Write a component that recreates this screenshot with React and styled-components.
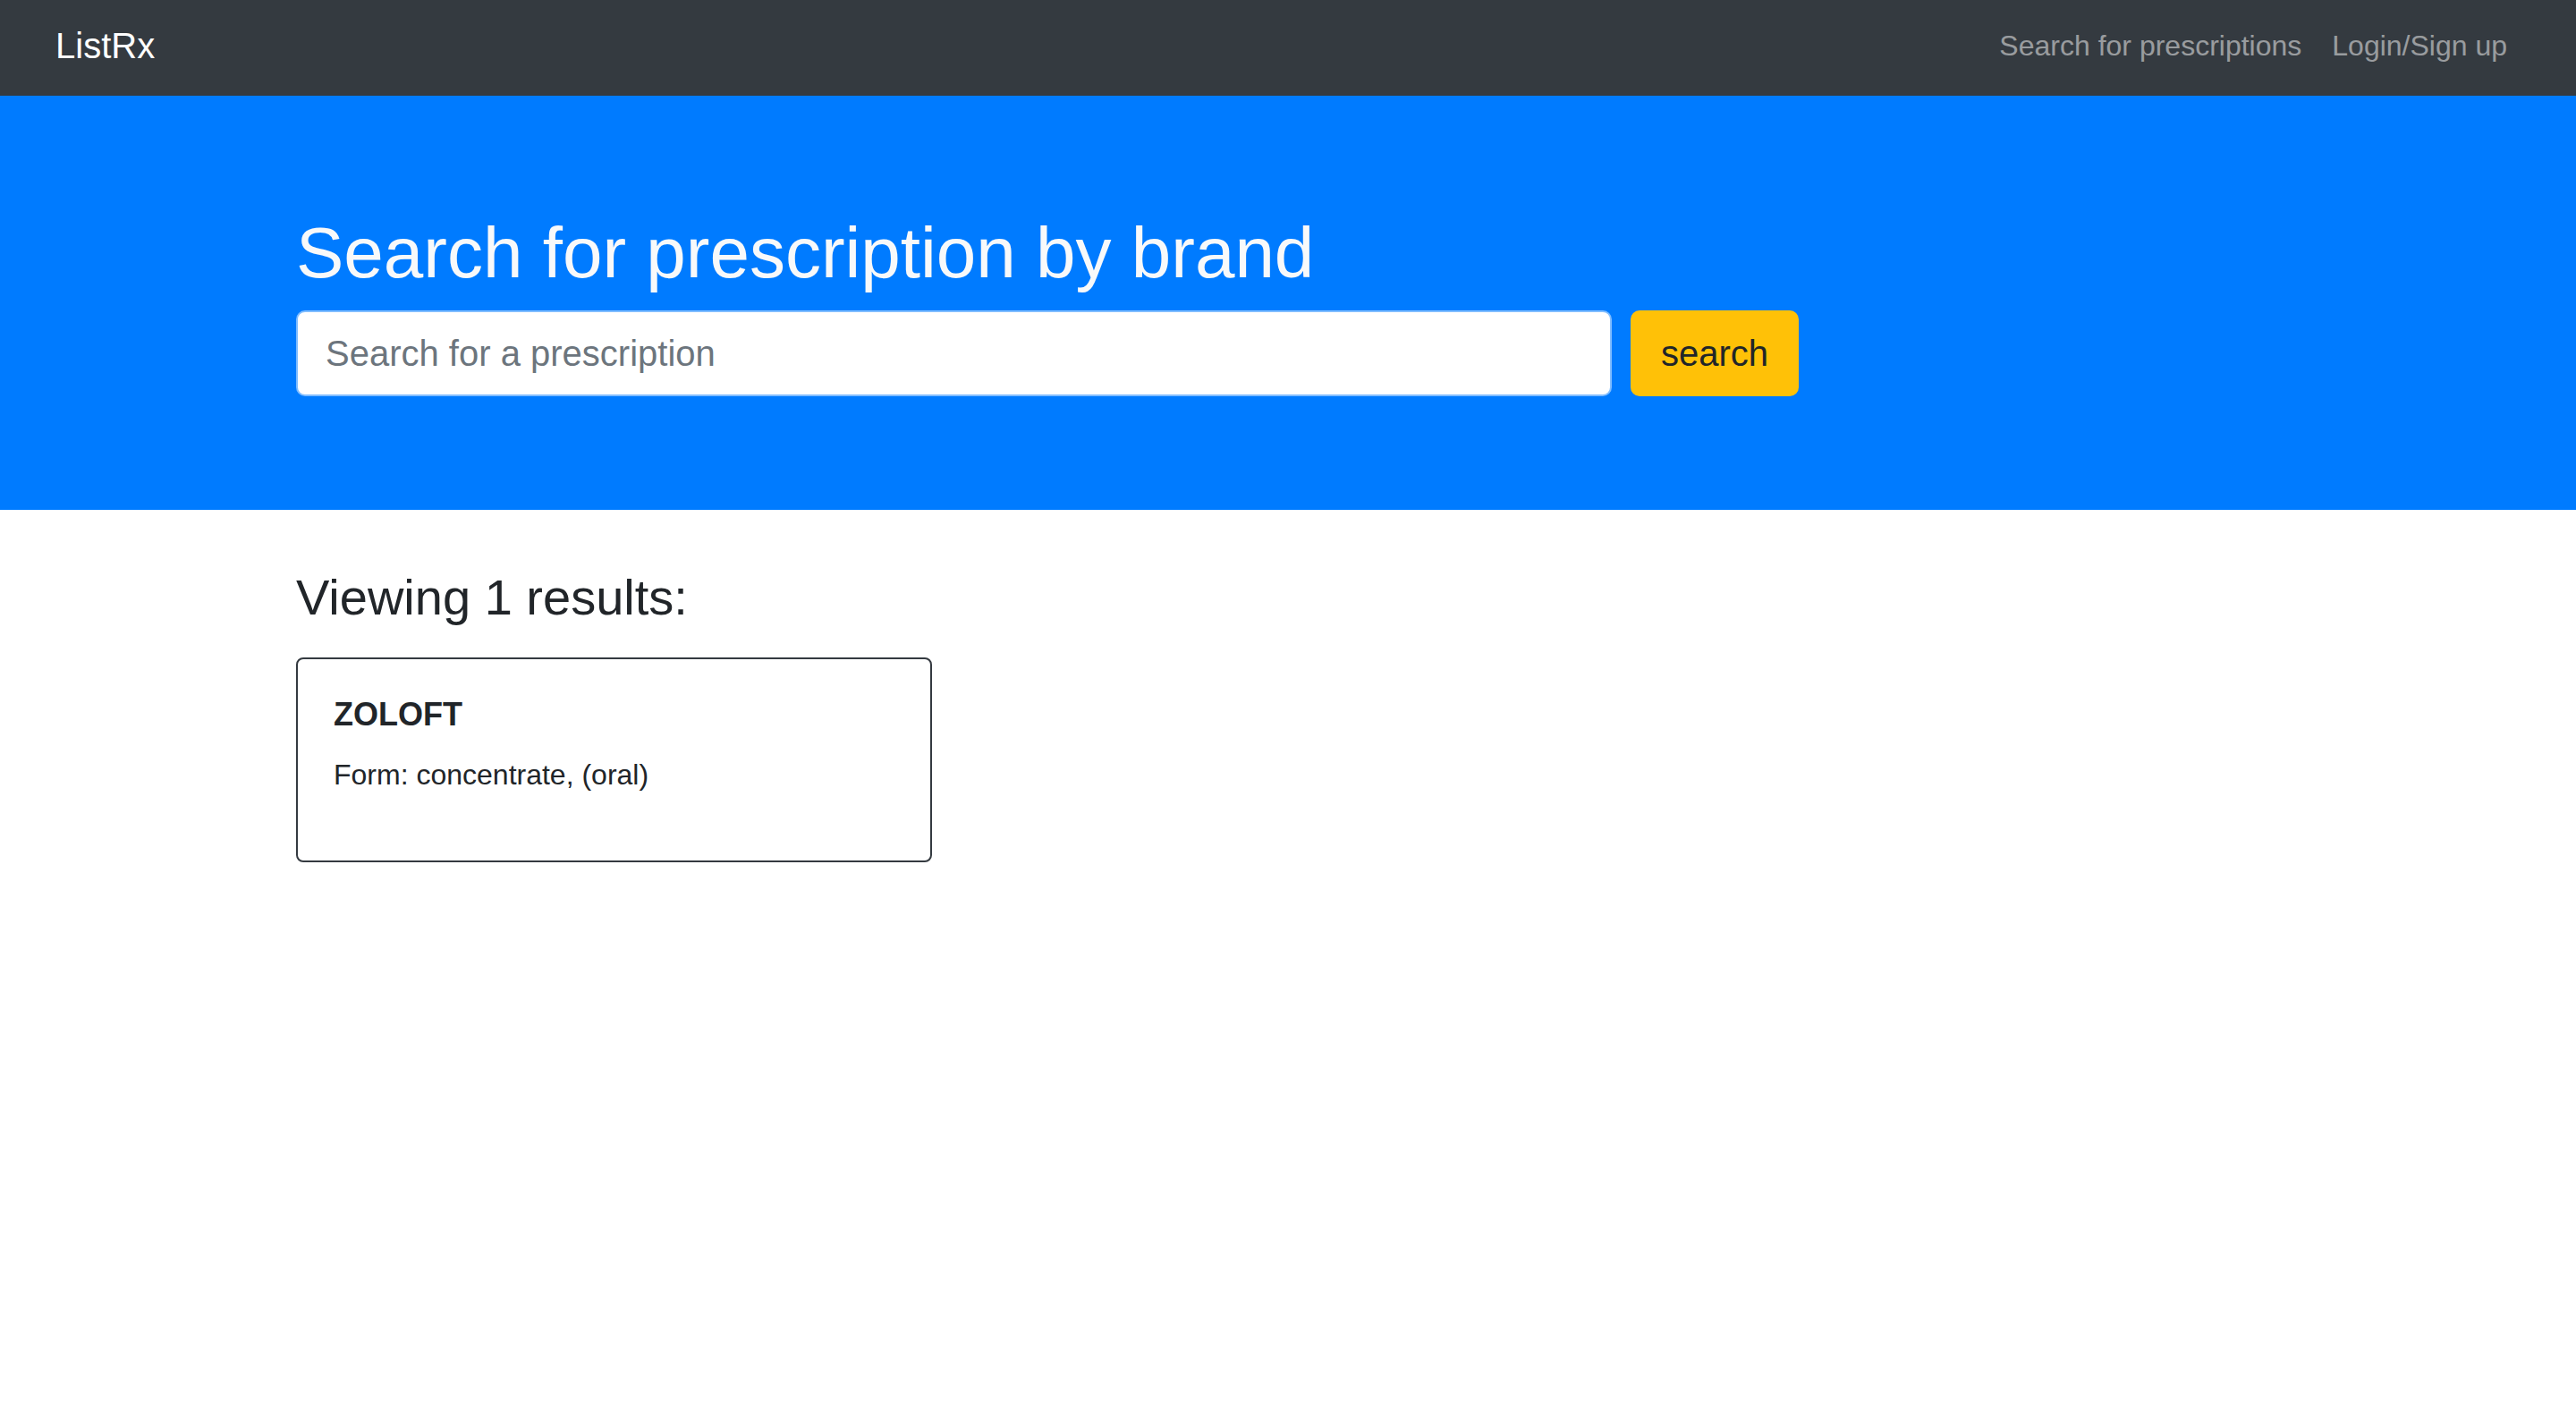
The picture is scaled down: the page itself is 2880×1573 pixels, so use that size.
import React from "react";
import styled, { createGlobalStyle } from "styled-components";

const GlobalStyle = createGlobalStyle`
  body {
    margin: 0;
    background: #fff;
    color: #212529;
    font-family: "Liberation Sans", Arial, Helvetica, sans-serif;
  }
  * {
    box-sizing: border-box;
  }
`;

const Nav = styled.nav`
  background-color: #343a40;
  height: 107px;
  display: flex;
  align-items: center;
  justify-content: space-between;
  padding: 0 60px 0 62px;
`;

const Brand = styled.a`
  color: #fff;
  font-size: 40px;
  line-height: 1;
  margin-top: -6px;
  text-decoration: none;
`;

const NavLinks = styled.div`
  display: flex;
  align-items: center;
  margin-top: -6px;
`;

const NavLink = styled.a`
  color: rgba(255, 255, 255, 0.5);
  font-size: 32px;
  line-height: 1;
  padding: 0 17px;
  text-decoration: none;
`;

const Jumbotron = styled.section`
  background-color: #007bff;
  padding: 128px 0 127px;
`;

const Container = styled.div`
  width: 2220px;
  margin: 0 auto;
  padding-left: 1px;
`;

const Title = styled.h1`
  color: #f8f9fa;
  font-size: 80px;
  font-weight: 400;
  line-height: 1.2;
  margin: 0 0 16px;
`;

const SearchRow = styled.form`
  display: flex;
  align-items: center;
  gap: 21px;
`;

const SearchInput = styled.input`
  width: 1471px;
  height: 96px;
  padding: 0 31px;
  font-family: inherit;
  font-size: 40px;
  color: #495057;
  background: #fff;
  border: 2px solid #80bdff;
  border-radius: 10px;
  outline: none;

  &::placeholder {
    color: #6c757d;
  }
`;

const SearchButton = styled.button`
  width: 188px;
  height: 96px;
  font-family: inherit;
  font-size: 40px;
  color: #212529;
  background: #ffc107;
  border: none;
  border-radius: 10px;
  padding: 0;
`;

const Results = styled.div`
  padding-top: 64px;
`;

const ResultsHeading = styled.h3`
  font-size: 56px;
  font-weight: 400;
  line-height: 1.2;
  margin: 0 0 34px;
`;

const Card = styled.div`
  width: 711px;
  height: 229px;
  border: 2px solid #343a40;
  border-radius: 8px;
  padding: 40px;
`;

const CardTitle = styled.h5`
  font-size: 36px;
  font-weight: 700;
  line-height: 1.2;
  margin: 0 0 22px;
`;

const CardText = styled.p`
  font-size: 32px;
  line-height: 1.5;
  margin: 0;
`;

export default function App() {
  return (
    <>
      <GlobalStyle />
      <Nav>
        <Brand>ListRx</Brand>
        <NavLinks>
          <NavLink>Search for prescriptions</NavLink>
          <NavLink>Login/Sign up</NavLink>
        </NavLinks>
      </Nav>

      <Jumbotron>
        <Container>
          <Title>Search for prescription by brand</Title>
          <SearchRow onSubmit={(e) => e.preventDefault()}>
            <SearchInput placeholder="Search for a prescription" />
            <SearchButton type="submit">search</SearchButton>
          </SearchRow>
        </Container>
      </Jumbotron>

      <Container>
        <Results>
          <ResultsHeading>Viewing 1 results:</ResultsHeading>
          <Card>
            <CardTitle>ZOLOFT</CardTitle>
            <CardText>Form: concentrate, (oral)</CardText>
          </Card>
        </Results>
      </Container>
    </>
  );
}
